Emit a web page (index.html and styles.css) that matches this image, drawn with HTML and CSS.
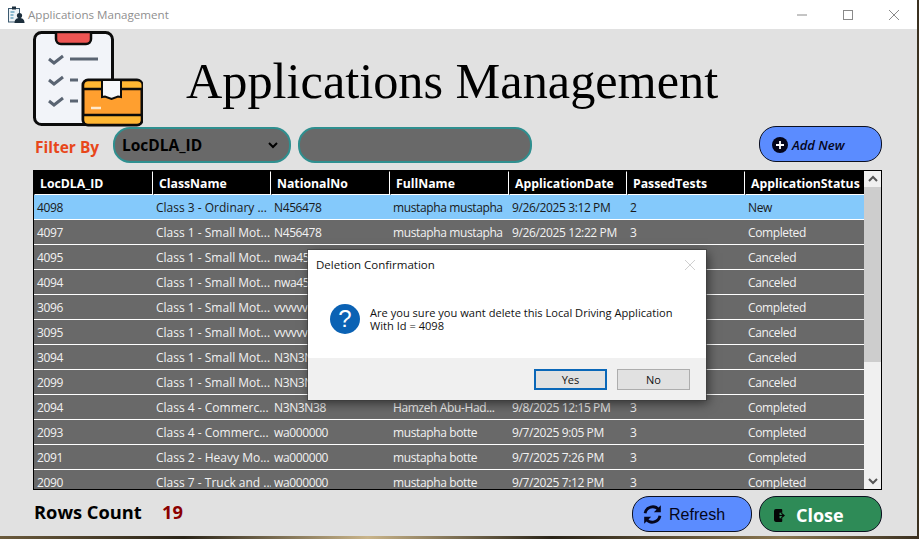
FILE: index.html
```html
<!DOCTYPE html>
<html lang="en">
<head>
<meta charset="utf-8">
<title>Applications Management</title>
<link rel="stylesheet" href="styles.css">
</head>
<body>
<div class="window">
  <header class="titlebar">
    <svg class="app-icon" viewBox="0 0 18 18" width="18" height="18">
      <rect x="1.5" y="2.5" width="11" height="13.5" fill="#eef3f7" stroke="#3c5a70"/>
      <rect x="5" y="0.5" width="4" height="3" fill="#1d2f3d"/>
      <path d="M3.5 6h4M3.5 9h3M3.5 12h3" stroke="#2a7fa5" stroke-width="1"/>
      <circle cx="12.5" cy="9.5" r="2.6" fill="#1d2f3d"/>
      <path d="M7.5 17c0-4 2.5-5 5-5s5 1 5 5z" fill="#1d2f3d"/>
    </svg>
    <span class="window-title">Applications Management</span>
    <div class="window-controls">
      <svg viewBox="0 0 12 12" width="12" height="12"><path d="M1 6h10" stroke="#8a8a8a" fill="none"/></svg>
      <svg viewBox="0 0 12 12" width="12" height="12"><rect x="1.5" y="1.5" width="9" height="9" stroke="#8a8a8a" fill="none"/></svg>
      <svg viewBox="0 0 12 12" width="12" height="12"><path d="M1 1l10 10M11 1L1 11" stroke="#8a8a8a" fill="none"/></svg>
    </div>
  </header>

  <main class="content">
    <section class="hero">
      <svg class="logo" viewBox="0 0 110 96" width="110" height="96">
        <rect x="1.5" y="1.5" width="78" height="92" rx="7" fill="#f2f4f9" stroke="#0b0b0b" stroke-width="3"/>
        <path d="M23 1h35v7a5 5 0 0 1-5 5H28a5 5 0 0 1-5-5z" fill="#ee5553" stroke="#0b0b0b" stroke-width="2.5"/>
        <g fill="none" stroke="#5a6472" stroke-width="3">
          <path d="M16 28l5 4 9-7M16 49l5 4 9-7M16 70l5 4 9-7"/>
          <path d="M37 28h28M37 49h8M37 70h8"/>
        </g>
        <rect x="50" y="49" width="59" height="45" rx="5" fill="#ff9f2f" stroke="#0b0b0b" stroke-width="3"/>
        <path d="M51.500 59V54a3.500 3.500 0 0 1 3.500-3.500h50a3.500 3.500 0 0 1 3.500 3.500v5z" fill="#ffb733"/>
        <path d="M51.500 84h56v5a3.500 3.500 0 0 1-3.500 3.500H55a3.500 3.500 0 0 1-3.500-3.500z" fill="#ffb733"/>
        <path d="M50 58h59M50 84h59" stroke="#0b0b0b" stroke-width="2.500"/>
        <path d="M69 49h19v17l-3-.5-6.500 2.500-6.500-2.500-3 .5z" fill="#f6f7fb" stroke="#0b0b0b" stroke-width="2"/>
        <path d="M58 77h10" stroke="#ffe9cc" stroke-width="2.500"/>
      </svg>
      <h1 class="page-title">Applications Management</h1>
    </section>

    <section class="filters">
      <span class="filter-label">Filter By</span>
      <div class="select-box">
        <span>LocDLA_ID</span>
        <svg viewBox="0 0 10 8" width="10" height="8"><path d="M1 2l4 4 4-4" fill="none" stroke="#000" stroke-width="2"/></svg>
      </div>
      <div class="filter-input"></div>
      <button class="pill pill-add">
        <svg viewBox="0 0 16 16" width="16" height="16"><circle cx="8" cy="8" r="8" fill="#04051a"/><path d="M8 4v8M4 8h8" stroke="#fff" stroke-width="1.800"/></svg>
        <span>Add New</span>
      </button>
    </section>

    <section class="grid-frame">
      <div class="grid-clip">
        <table class="grid">
          <colgroup>
            <col class="c1"><col class="c2"><col class="c3"><col class="c4"><col class="c5"><col class="c6"><col class="c7">
          </colgroup>
          <thead>
            <tr><th>LocDLA_ID</th><th>ClassName</th><th>NationalNo</th><th>FullName</th><th>ApplicationDate</th><th>PassedTests</th><th>ApplicationStatus</th></tr>
          </thead>
          <tbody>
            <tr class="selected"><td>4098</td><td>Class 3 - Ordinary ...</td><td>N456478</td><td>mustapha mustapha</td><td>9/26/2025 3:12 PM</td><td>2</td><td>New</td></tr>
            <tr><td>4097</td><td>Class 1 - Small Mot...</td><td>N456478</td><td>mustapha mustapha</td><td>9/26/2025 12:22 PM</td><td>3</td><td>Completed</td></tr>
            <tr><td>4095</td><td>Class 1 - Small Mot...</td><td>nwa456</td><td>mustapha botte</td><td>9/25/2025 9:10 PM</td><td>3</td><td>Canceled</td></tr>
            <tr><td>4094</td><td>Class 1 - Small Mot...</td><td>nwa456</td><td>mustapha botte</td><td>9/25/2025 9:02 PM</td><td>3</td><td>Canceled</td></tr>
            <tr><td>3096</td><td>Class 1 - Small Mot...</td><td>vvvvvv</td><td>mustapha botte</td><td>9/20/2025 4:40 PM</td><td>3</td><td>Completed</td></tr>
            <tr><td>3095</td><td>Class 1 - Small Mot...</td><td>vvvvvv</td><td>mustapha botte</td><td>9/20/2025 4:31 PM</td><td>3</td><td>Canceled</td></tr>
            <tr><td>3094</td><td>Class 1 - Small Mot...</td><td>N3N3N38</td><td>Hamzeh Abu-Had...</td><td>9/20/2025 4:22 PM</td><td>3</td><td>Canceled</td></tr>
            <tr><td>2099</td><td>Class 1 - Small Mot...</td><td>N3N3N38</td><td>Hamzeh Abu-Had...</td><td>9/9/2025 1:05 PM</td><td>3</td><td>Canceled</td></tr>
            <tr><td>2094</td><td>Class 4 - Commerc...</td><td>N3N3N38</td><td>Hamzeh Abu-Had...</td><td>9/8/2025 12:15 PM</td><td>3</td><td>Completed</td></tr>
            <tr><td>2093</td><td>Class 4 - Commerc...</td><td>wa000000</td><td>mustapha botte</td><td>9/7/2025 9:05 PM</td><td>3</td><td>Completed</td></tr>
            <tr><td>2091</td><td>Class 2 - Heavy Mo...</td><td>wa000000</td><td>mustapha botte</td><td>9/7/2025 7:26 PM</td><td>3</td><td>Completed</td></tr>
            <tr><td>2090</td><td>Class 7 - Truck and ...</td><td>wa000000</td><td>mustapha botte</td><td>9/7/2025 7:12 PM</td><td>3</td><td>Completed</td></tr>
          </tbody>
        </table>
      </div>
      <div class="scrollbar">
        <svg class="arrow" viewBox="0 0 10 8" width="10" height="8"><path d="M1 6l4-4 4 4" fill="none" stroke="#555" stroke-width="2"/></svg>
        <div class="thumb"></div>
        <div class="track"></div>
        <svg class="arrow" viewBox="0 0 10 8" width="10" height="8"><path d="M1 2l4 4 4-4" fill="none" stroke="#555" stroke-width="2"/></svg>
      </div>
    </section>

    <footer class="footer">
      <span class="rows-label">Rows Count</span>
      <span class="rows-value">19</span>
      <div class="footer-actions">
        <button class="pill pill-refresh">
          <svg viewBox="0 0 24 24" width="21" height="21"><g fill="none" stroke="#05061c" stroke-width="3.200"><path d="M3.500 10.500A8.800 8.800 0 0 1 19 6.500"/><path d="M20.500 13.500A8.800 8.800 0 0 1 5 17.500"/></g><path d="M21.500 1.500v8h-8zM2.500 22.500v-8h8z" fill="#05061c"/></svg>
          <span>Refresh</span>
        </button>
        <button class="pill pill-close">
          <svg viewBox="0 0 12 14" width="11" height="13"><path d="M0 2a2 2 0 0 1 2-2h6a1 1 0 0 1 1 1v3H6v6h3v3a1 1 0 0 1-1 1H2a2 2 0 0 1-2-2z" fill="#050505"/><path d="M5 7h5M8 4.500L11 7 8 9.500" fill="none" stroke="#050505" stroke-width="1.300"/></svg>
          <span>Close</span>
        </button>
      </div>
    </footer>
  </main>

  <div class="dialog" role="dialog">
    <div class="dialog-head">
      <span>Deletion Confirmation</span>
      <svg viewBox="0 0 12 12" width="12" height="12"><path d="M1 1l10 10M11 1L1 11" stroke="#d0d0d0" fill="none"/></svg>
    </div>
    <div class="dialog-body">
      <span class="question">?</span>
      <p class="dialog-text">Are you sure you want delete this Local Driving Application<br>With Id = 4098</p>
    </div>
    <div class="dialog-foot">
      <button class="dlg-btn dlg-default">Yes</button>
      <button class="dlg-btn">No</button>
    </div>
  </div>
</div>
</body>
</html>
```

FILE: styles.css
```css
* { box-sizing: border-box; }

html, body {
  margin: 0;
  height: 100%;
}

body {
  width: 919px;
  height: 539px;
  overflow: hidden;
  background: linear-gradient(90deg, #6b5a3c, #2a2418 20%, #c9b48a 40%, #2a2418 60%, #8a7650 85%, #3a3020);
  font-family: "Open Sans", "Noto Sans", sans-serif;
}

.window {
  position: relative;
  width: 917px;
  height: 536px;
  display: flex;
  flex-direction: column;
  background: #e1e1e1;
}

.titlebar {
  height: 29px;
  flex: none;
  background: #fff;
  display: flex;
  align-items: center;
  padding-left: 7px;
}

.app-icon { flex: none; }

.window-title {
  margin-left: 3px;
  font-size: 11.600px;
  color: #8f8f8f;
}

.window-controls {
  margin-left: auto;
  display: flex;
  gap: 34px;
  padding-right: 17px;
}

.content {
  flex: 1;
  display: flex;
  flex-direction: column;
  padding: 2px 35px 0 33px;
}

.hero {
  display: flex;
  align-items: flex-start;
  height: 95px;
}

.logo { flex: none; }

.page-title {
  margin: 19px 0 0 43px;
  font-family: "Liberation Serif", serif;
  font-weight: 400;
  font-size: 50.300px;
  line-height: 62px;
  color: #000;
  white-space: nowrap;
}

.filters {
  display: flex;
  align-items: center;
  height: 38px;
}

.filter-label {
  width: 80px;
  padding-left: 2px;
  padding-top: 3px;
  font-size: 15.500px;
  font-weight: 700;
  color: #e8471a;
}

.select-box {
  width: 178px;
  height: 36px;
  display: flex;
  align-items: center;
  justify-content: space-between;
  padding: 0 11px 0 7px;
  background: #696969;
  border: 2px solid #2f8f8f;
  border-radius: 17px;
  font-size: 15.500px;
  font-weight: 700;
  color: #000;
}

.filter-input {
  width: 234px;
  height: 36px;
  margin-left: 7px;
  background: #696969;
  border: 2px solid #2f8f8f;
  border-radius: 17px;
}

.pill {
  display: flex;
  align-items: center;
  height: 36px;
  padding: 0;
  border: 1px solid #0c1020;
  border-radius: 17px;
  font-family: inherit;
  color: #04051a;
}

.pill-add {
  width: 123px;
  align-self: flex-start;
  margin-left: auto;
  padding: 1px 0 0 12px;
  gap: 4px;
  background: #5b8cff;
  font-size: 13px;
  font-style: italic;
  font-weight: 600;
}

.grid-frame {
  display: flex;
  height: 320px;
  margin-top: 6px;
  background: #fff;
  border: 1px solid #000;
}

.grid-clip {
  width: 831px;
  height: 318px;
  overflow: hidden;
  background: #fff;
}

.grid {
  width: 831px;
  table-layout: fixed;
  border-collapse: separate;
  border-spacing: 0;
  font-size: 12px;
}

.c1 { width: 119px; }
.c2 { width: 118px; }
.c3 { width: 119px; }
.c4 { width: 119px; }
.c5 { width: 118px; }
.c6 { width: 118px; }
.c7 { width: 120px; }

.grid th {
  height: 24px;
  padding: 0 0 0 5px;
  background: #000;
  color: #fff;
  font-size: 12.250px;
  font-weight: 700;
  text-align: left;
  white-space: nowrap;
  overflow: hidden;
  border: 1px solid #000;
  border-right-color: #fff;
  border-bottom-color: #fff;
}

.grid th:last-child { border-right-color: #000; }

.grid td {
  height: 25px;
  padding: 0 0 0 3px;
  background: #696969;
  color: #f2f2f2;
  letter-spacing: -.38px;
  white-space: nowrap;
  overflow: hidden;
  border-bottom: 1px solid #fff;
}

.grid td:nth-child(2) { letter-spacing: 0; }

.grid .selected td {
  background: #84c9fb;
  color: #1a1a1a;
}

.scrollbar {
  width: 17px;
  display: flex;
  flex-direction: column;
  align-items: center;
  background: #f0f0f0;
}

.arrow {
  flex: none;
  margin: 4px 0;
}

.thumb {
  width: 17px;
  height: 175px;
  flex: none;
  background: #cdcdcd;
}

.track { flex: 1; }

.footer {
  flex: 1;
  display: flex;
  align-items: flex-start;
}

.rows-label {
  margin: 9px 0 0 1px;
  width: 128px;
  font-size: 18.300px;
  font-weight: 700;
  color: #000;
}

.rows-value {
  margin-top: 9px;
  font-size: 18.300px;
  font-weight: 700;
  color: #8b0000;
}

.footer-actions {
  margin-left: auto;
  margin-top: 6px;
  display: flex;
  gap: 7px;
}

.pill-refresh {
  width: 120px;
  padding: 1px 0 0 9px;
  gap: 6px;
  background: #5b8cff;
  font-family: "Liberation Sans", sans-serif;
  font-size: 16px;
}

.pill-close {
  width: 123px;
  padding: 2px 0 0 14px;
  gap: 11px;
  background: #2e8b57;
  color: #fff;
  font-size: 18px;
  font-weight: 700;
}

.dialog {
  position: absolute;
  left: 308px;
  top: 250px;
  width: 398px;
  height: 150px;
  display: flex;
  flex-direction: column;
  background: #fff;
  box-shadow: 0 0 0 1px rgba(60, 60, 60, .6), 2px 3px 10px rgba(0, 0, 0, .55);
}

.dialog-head {
  height: 29px;
  flex: none;
  display: flex;
  align-items: center;
  justify-content: space-between;
  padding: 0 10px 0 8px;
  font-size: 11.500px;
  color: #111;
}

.dialog-body {
  flex: 1;
  display: flex;
  align-items: center;
  padding: 0 0 0 22px;
  gap: 10px;
}

.question {
  width: 30px;
  height: 30px;
  flex: none;
  display: flex;
  align-items: center;
  justify-content: center;
  border-radius: 50%;
  background: #0b62b4;
  color: #fff;
  font-family: "Liberation Sans", sans-serif;
  font-size: 24px;
  line-height: 30px;
}

.dialog-text {
  margin: 0;
  font-size: 11.100px;
  line-height: 13px;
  color: #111;
}

.dialog-foot {
  height: 42px;
  flex: none;
  display: flex;
  align-items: center;
  justify-content: flex-end;
  gap: 10px;
  padding: 1px 16px 0 0;
  background: #f0f0f0;
}

.dlg-btn {
  width: 73px;
  height: 21px;
  padding: 0;
  background: #e1e1e1;
  border: 1px solid #adadad;
  font-family: inherit;
  font-size: 11px;
  color: #111;
}

.dlg-default { border: 2px solid #0a67b8; }
```
